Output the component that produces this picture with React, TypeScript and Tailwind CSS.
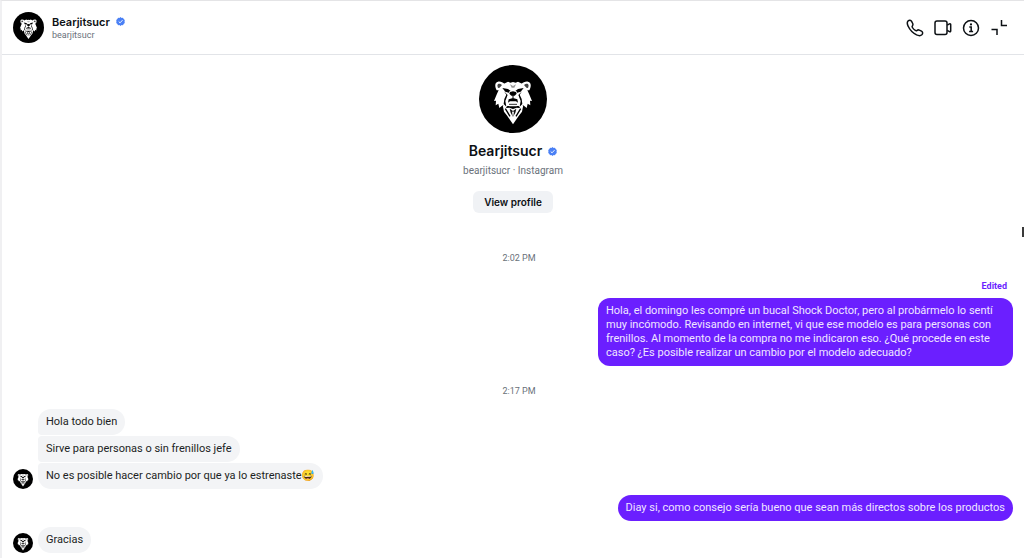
import type { ReactNode } from 'react';

interface Message {
    id: number;
    text: string;
}

const firstReplies: Message[] = [
    { id: 1, text: 'Hola todo bien' },
    { id: 2, text: 'Sirve para personas o sin frenillos jefe' },
    { id: 3, text: 'No es posible hacer cambio por que ya lo estrenaste😅' },
];

function BearAvatar({ className }: { className: string }) {
    return (
        <svg viewBox="-33 -32 204 204" className={`shrink-0 ${className}`} role="img" aria-label="Bearjitsucr">
            <circle cx="69" cy="70" r="102" fill="#000" />
            {/* Ears */}
            <path d="M20 44C13 31 15 19 24 18c8-1 15 2 20 7L30 44zM118 44c7-13 5-25-4-26-8-1-15 2-20 7l14 19z" fill="#fff" />
            <path d="M24 37c-3-7-2-12 2-13 4 0 7 1 10 4l-7 8zM114 37c3-7 2-12-2-13-4 0-7 1-10 4l7 8z" fill="#444" />
            {/* Head and side fur */}
            <path
                d="M42 24l12-6 7 3 8-2 8 2 7-3 12 6 13 13 8 17 9 22-6-1 1 14-8-5-3 13-11-9-5 12-8-9H52l-8 9-5-12-11 9-3-13-8 5 1-14-6 1 9-22 8-17z"
                fill="#fff"
            />
            {/* Brow and eyes */}
            <path d="M37 37l17 3 9 7-4 5-13-4zM101 37l-17 3-9 7 4 5 13-4z" fill="#000" />
            <path d="M60 26l9 5 9-5-5 10h-8z" fill="#999" />
            {/* Cheek lines */}
            <path d="M42 47l7 10-6 13-2 15 8 8-3-17 7-18zM96 47l-7 10 6 13 2 15-8 8 3-17-7-18z" fill="#000" />
            {/* Muzzle */}
            <path d="M59 46h20l7 18 2 18-8 10H58l-8-10 2-18z" fill="#fff" />
            <path d="M60 49l9-2 9 2 2 5-6 6H64l-6-6z" fill="#000" />
            <path d="M69 58v9" stroke="#000" strokeWidth="3" />
            <path d="M54 81l2-10 13-4 13 4 2 10-6-4H60z" fill="#000" />
            <path d="M57 86h24" stroke="#333" strokeWidth="3" />
            {/* Beard */}
            <path d="M38 88l12 9 8-1 11 4 11-4 8 1 12-9-4 20-10 13-17 25-17-25-10-13z" fill="#fff" />
            <path d="M46 99l14 23M92 99l-14 23" stroke="#000" strokeWidth="4" />
            <path d="M59 99l10 7 10-7-3 12-7 13-7-13z" fill="#111" />
            <path d="M66 107l3 2 3-2-3 24z" fill="#fff" />
        </svg>
    );
}

function VerifiedBadge() {
    return (
        <svg viewBox="0 0 40 40" className="size-[9px] shrink-0" role="img" aria-label="Verified">
            <path
                d="M20 0l5 4 6-1 3 6 5 4-1 7 1 7-5 4-3 6-6-1-5 4-5-4-6 1-3-6-5-4 1-7-1-7 5-4 3-6 6 1z"
                fill="#4a80f5"
            />
            <path d="M12 20l6 6 11-12" fill="none" stroke="#fff" strokeWidth="4" />
        </svg>
    );
}

function IconButton({ label, children }: { label: string; children: ReactNode }) {
    return (
        <button type="button" aria-label={label} className="size-[18px]">
            <svg viewBox="0 0 18 18" className="size-full" fill="none" stroke="#0c1014" strokeWidth="1.5">
                {children}
            </svg>
        </button>
    );
}

function Incoming({ children, className }: { children: ReactNode; className: string }) {
    return <p className={`bg-[#f3f4f6] px-2 py-1.5 text-[#1c1f24] ${className}`}>{children}</p>;
}

function Timestamp({ time }: { time: string }) {
    return <time className="pl-3 text-center text-[9px] leading-3 text-[#6a717a]">{time}</time>;
}

export default function App() {
    return (
        <div className="relative flex min-h-screen flex-col overflow-hidden border-t border-l-2 border-t-[#e4e4e6] border-l-[#f0f0f2] bg-white font-['Roboto','Noto_Color_Emoji',sans-serif] text-[11px] leading-[14px] text-[#0c1014]">
            <header className="flex items-center justify-between border-b border-[#e2e4e8] py-[11px] pr-4 pl-[11px]">
                <div className="flex items-center gap-2">
                    <BearAvatar className="size-[31px]" />
                    <div>
                        <div className="flex items-center gap-1.5">
                            <h1 className="font-['Inter',sans-serif] font-semibold">Bearjitsucr</h1>
                            <VerifiedBadge />
                        </div>
                        <p className="text-[9px] leading-3 text-[#6a717a]">bearjitsucr</p>
                    </div>
                </div>
                <div className="flex items-center gap-2.5">
                    <IconButton label="Audio call">
                        <path
                            d="M2 2C3.200.8 4.900.9 5.600 2.300L6.700 4.500c.4.9.3 1.500-.2 2.200-.5.6-.5 1.100-.1 1.800.7 1.200 1.700 2.200 2.900 2.900.7.4 1.200.4 1.800-.1.700-.5 1.300-.6 2.200-.2l2.200 1.100c1.400.7 1.500 2.400.3 3.600-1.300 1.200-3.200 1-5.200.1A18 18 0 0 1 2.200 7.300C1.200 5.300.9 3.300 2 2z"
                            strokeLinejoin="round"
                        />
                    </IconButton>
                    <IconButton label="Video call">
                        <rect x="1" y="2" width="12" height="13.5" rx="2" />
                        <path d="M13.2 6.2l2.3-1.3c.6-.3 1.2 0 1.2.7v6.4c0 .7-.6 1-1.2.7l-2.3-1.3" strokeLinejoin="round" />
                    </IconButton>
                    <IconButton label="Conversation information">
                        <circle cx="9" cy="9" r="7.5" />
                        <circle cx="9" cy="5.4" r="1.1" fill="#0c1014" stroke="none" />
                        <path d="M7.3 8h1.9v4.5M7.1 12.6h4" />
                    </IconButton>
                    <IconButton label="Minimize">
                        <path d="M11.5 1v5.500H17M1.500 10.500H7V16" />
                    </IconButton>
                </div>
            </header>

            <main className="flex flex-col pt-[10px] pr-[11px] pb-1.5 pl-[11px]">
                <section className="flex flex-col items-center">
                    <BearAvatar className="size-[68px]" />
                    <div className="mt-2 flex items-center gap-1.5">
                        <h2 className="font-['Inter',sans-serif] text-sm leading-5 font-semibold">Bearjitsucr</h2>
                        <VerifiedBadge />
                    </div>
                    <p className="mt-[3px] text-[10px] leading-[14px] text-[#6a717a]">bearjitsucr · Instagram</p>
                    <button
                        type="button"
                        className="mt-[13px] rounded-md bg-[#f0f2f5] px-[11px] py-1 font-['Inter',sans-serif] text-[10px] font-semibold"
                    >
                        View profile
                    </button>
                </section>

                <div className="mt-[39px] flex flex-col">
                    <Timestamp time="2:02 PM" />
                </div>

                <div className="mt-4 flex flex-col items-end">
                    <span className="mr-1.5 text-[9px] leading-3 font-bold text-[#6b1fff]">Edited</span>
                    <p className="mt-1.5 max-w-[415px] rounded-xl bg-[#6b1fff] px-2 py-1.5 text-[#f0e6ff]">
                        Hola, el domingo les compré un bucal Shock Doctor, pero al probármelo lo sentí muy incómodo.
                        Revisando en internet, vi que ese modelo es para personas con frenillos. Al momento de la compra
                        no me indicaron eso. ¿Qué procede en este caso? ¿Es posible realizar un cambio por el modelo
                        adecuado?
                    </p>
                </div>

                <div className="mt-[19px] flex flex-col">
                    <Timestamp time="2:17 PM" />
                </div>

                <div className="mt-3 flex items-end gap-[5px]">
                    <BearAvatar className="size-5" />
                    <div className="flex flex-col items-start gap-px">
                        {firstReplies.map((message, i) => (
                            <Incoming
                                key={message.id}
                                className={
                                    i === 0
                                        ? 'rounded-[13px] rounded-bl-sm'
                                        : i === firstReplies.length - 1
                                            ? 'rounded-[13px] rounded-tl-sm'
                                            : 'rounded-r-[13px] rounded-l-sm'
                                }
                            >
                                {message.text}
                            </Incoming>
                        ))}
                    </div>
                </div>

                <div className="mt-1.5 flex justify-end">
                    <p className="rounded-[13px] bg-[#6b1fff] px-2 py-1.5 text-[#f0e6ff]">
                        Diay si, como consejo sería bueno que sean más directos sobre los productos
                    </p>
                </div>

                <div className="mt-1.5 flex items-end gap-[5px]">
                    <BearAvatar className="size-5" />
                    <Incoming className="rounded-[13px]">Gracias</Incoming>
                </div>
            </main>

            {/* Edge handle */}
            <div className="absolute top-[226px] right-0 h-2.5 w-0.5 bg-[#3a3a3a]" />
        </div>
    );
}
